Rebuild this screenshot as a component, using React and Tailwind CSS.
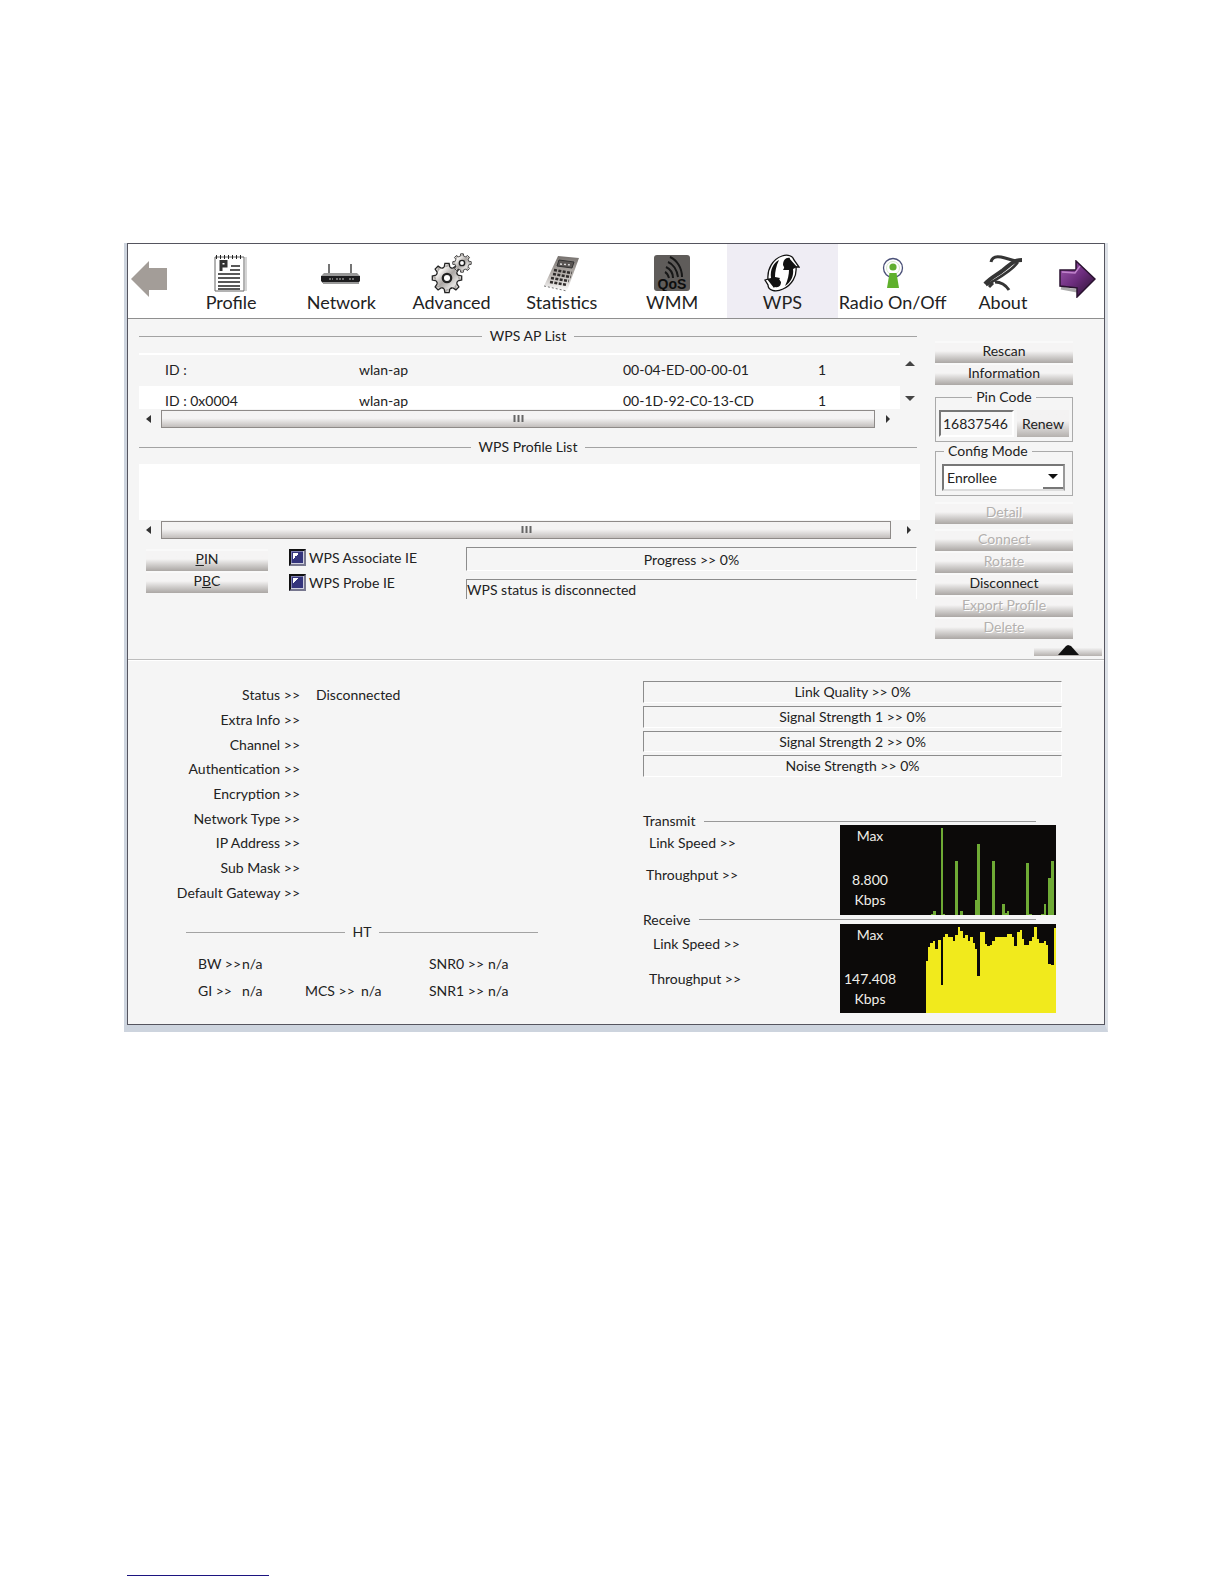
import React from "react";

const ProfileIcon = () => (
  <svg width="34" height="38" viewBox="0 0 34 38" aria-hidden="true">
    <path d="M1 3H30V37H1Z" fill="#fff" stroke="#666" strokeWidth="1" />
    <path d="M32 3V37" stroke="#aaa" strokeWidth="1" />
    <path d="M2 3H30" stroke="#222" strokeWidth="4" strokeDasharray="1 3" />
    <path d="M7 7.500H12V12H7M7 6V17" stroke="#333" strokeWidth="3" fill="none" />
    <path d="M17 12H26M16 16H26M4 20H26M4 24H26M4 28H26M4 32H26M4 35H26" stroke="#222" strokeWidth="1.6" />
  </svg>
);

const NetworkIcon = () => (
  <svg width="42" height="38" viewBox="0 2 42 38" aria-hidden="true">
    <path d="M9 12V23M31 12V23" stroke="#666" strokeWidth="1.8" />
    <path d="M4 21H37L40 24H1Z" fill="#999" />
    <path d="M1 24H40V29L38 31H3L1 29Z" fill="#1c1c1e" />
    <path d="M3 31H39" stroke="#999" strokeWidth="2" />
    <path d="M9 27H13M16 27H24M29 27H34" stroke="#8a8a8a" strokeWidth="1.3" strokeDasharray="2 1" />
  </svg>
);

const teeth = [0, 45, 90, 135, 180, 225, 270, 315];

const Gear = ({ fill }) => (
  <g stroke="#222" strokeWidth="1.2">
    {teeth.map((a) => (
      <path key={a} d="M-3 -9L-2 -14H2L3 -9Z" fill={fill} transform={`rotate(${a})`} />
    ))}
    <circle r="10.5" fill={fill} stroke="none" />
    {teeth.map((a) => (
      <path key={a} d="M2.8 -10.1A10.5 10.5 0 0 1 5.2 -9.1" fill="none" transform={`rotate(${a})`} />
    ))}
    <circle r="4" fill="#fff" strokeWidth="2.2" />
  </g>
);

const AdvancedIcon = () => (
  <svg width="42" height="42" viewBox="0 0 42 42" aria-hidden="true">
    <defs>
      <linearGradient id="gear" x1="0" y1="0" x2="1" y2="1">
        <stop offset="0.2" stopColor="#f4f2f0" />
        <stop offset="0.5" stopColor="#aaa6a3" />
        <stop offset="0.8" stopColor="#e2e0de" />
      </linearGradient>
    </defs>
    <g transform="translate(16 26) scale(1.05)"><Gear fill="url(#gear)" /></g>
    <g transform="translate(31 11) scale(.66)"><Gear fill="url(#gear)" /></g>
  </svg>
);

const StatisticsIcon = () => (
  <svg width="38" height="40" viewBox="0 0 38 40" aria-hidden="true">
    <defs>
      <linearGradient id="calc" x1="0" y1="0" x2="0" y2="1">
        <stop offset="0" stopColor="#75706d" />
        <stop offset="0.55" stopColor="#b9b4b0" />
        <stop offset="1" stopColor="#fff" />
      </linearGradient>
    </defs>
    <path d="M15 3L36 5L24 38L1 33Z" fill="url(#calc)" />
    <path d="M1 33L24 38" stroke="#777" strokeWidth="1" strokeDasharray="2 2" />
    <path d="M16 7L31 9L29 15L14 13Z" fill="#5a5654" stroke="#333" />
    <path d="M17 11L28 12" stroke="#ddd" strokeWidth="1.4" strokeDasharray="2 2" />
    <g stroke="#2f2c2b" strokeWidth="2.6" strokeDasharray="3 1.4">
      <path d="M11 17L29 20M10 21L28 24M8 25L26 28M7 29L24 32" />
    </g>
  </svg>
);

const WmmIcon = () => (
  <svg width="36" height="36" viewBox="0 0 36 36" aria-hidden="true">
    <rect width="36" height="36" rx="3" fill="#5f5c5a" />
    <g fill="none" stroke="#171717" strokeWidth="2">
      <path d="M16 2C23 5 28 13 28 22" />
      <path d="M14 7C19 9 23 15 24 22" />
      <path d="M12 12C16 14 19 18 19 23" />
      <path d="M11 17C13 18 14 20 15 23" />
    </g>
    <text x="18" y="34" textAnchor="middle" fontFamily="Liberation Sans" fontWeight="bold" fontSize="14" fill="#0d0d0d">QoS</text>
  </svg>
);

const WpsIcon = () => (
  <svg width="36" height="38" viewBox="0 0 36 38" aria-hidden="true">
    <path d="M18 2C24 0 29 2 30 6L35 13H32C33 22 28 31 19 35C11 39 4 36 4 31L1 26L4 25C3 15 9 5 18 2Z" fill="#fff" stroke="#111" strokeWidth="1.3" />
    <path d="M15 6C12 12 11 18 11 23L16 24L10 34L3 25L7 24C6 16 9 9 15 6Z" fill="#111" />
    <path d="M9 32C14 35 17 32 17 28L15 25Z" fill="#111" />
    <path d="M21 32C24 26 25 20 25 16H19L25 4L33 13L29 15C30 22 27 28 21 32Z" fill="#111" />
    <path d="M26 4C22 3 19 6 19 11L21 15Z" fill="#111" />
  </svg>
);

const RadioIcon = () => (
  <svg width="24" height="32" viewBox="0 0 24 32" aria-hidden="true">
    <circle cx="12" cy="11" r="9.5" fill="#fff" stroke="#4a5078" strokeWidth="1.3" />
    <circle cx="12" cy="11" r="6.5" fill="#fff" stroke="#d5e8cb" strokeWidth="1" />
    <circle cx="12" cy="10" r="3.6" fill="#5fae2e" />
    <path d="M8.5 16H15.5L18 31H6Z" fill="#5fb02c" />
  </svg>
);

const AboutIcon = () => (
  <svg width="42" height="38" viewBox="0 0 42 38" aria-hidden="true" fill="none" stroke="#353535" strokeLinejoin="round">
    <path d="M9 8C10 3 14 2 19 3C24 4 29 6 34 7" strokeWidth="3" />
    <path d="M40 6C31 6 28 11 20 17C13 22 7 25 3 30" strokeWidth="4" />
    <path d="M36 8C30 17 18 23 8 29L4 31" strokeWidth="2.6" />
    <path d="M13 28C18 28 23 30 27 36M7 33L11 29" strokeWidth="3" />
  </svg>
);

const TABS = [
  ["Profile", ProfileIcon],
  ["Network", NetworkIcon],
  ["Advanced", AdvancedIcon],
  ["Statistics", StatisticsIcon],
  ["WMM", WmmIcon],
  ["WPS", WpsIcon],
  ["Radio On/Off", RadioIcon],
  ["About", AboutIcon],
];

const Toolbar = () => (
  <nav className="flex h-[75px] border-b border-[#8f8f8f] bg-white">
    <button type="button" aria-label="Previous" className="w-12 pl-[3px] pb-1">
      <svg width="37" height="36" viewBox="0 0 37 36"><path d="M0 18L18 0V7H36V29H18V36Z" fill="#a39d98" /></svg>
    </button>
    {TABS.map(([name, Icon]) => (
      <button
        key={name}
        type="button"
        className={`flex min-w-0 flex-1 flex-col items-center whitespace-nowrap text-lg leading-6 text-[#222] ${name === "WPS" ? "bg-[#efedf4]" : ""}`}
      >
        <span className="flex h-[46px] items-center justify-center pt-3"><Icon /></span>
        {name}
      </button>
    ))}
    <button type="button" aria-label="Next" className="w-[46px] pb-1">
      <svg width="38" height="38" viewBox="0 0 38 38">
        <defs>
          <linearGradient id="next" x1="0" y1="0" x2="1" y2="1">
            <stop offset="0" stopColor="#a05ab0" />
            <stop offset="0.5" stopColor="#6b2c7c" />
            <stop offset="1" stopColor="#241029" />
          </linearGradient>
        </defs>
        <path d="M3 28L19 31" stroke="#aaa" strokeWidth="3" />
        <path d="M2 10L18 10V1L37 19L19 37V28L2 26Z" fill="url(#next)" stroke="#2a1230" strokeWidth="1.5" />
        <path d="M4 12L17 13L22 6" stroke="#c083cc" strokeWidth="1.5" fill="none" />
      </svg>
    </button>
  </nav>
);

const Rule = ({ children, className = "" }) => (
  <div className={`flex items-center gap-2 whitespace-nowrap ${className}`}>
    <span className="h-px flex-1 bg-[#a3a3a3]" />
    {children}
    <span className="h-px flex-1 bg-[#a3a3a3]" />
  </div>
);

const Scrollbar = ({ rightClass }) => (
  <div className="flex h-[19px] items-center">
    <svg width="22" height="10" viewBox="0 0 22 10"><path d="M7 5L12 1V9Z" fill="#333" /></svg>
    <div className="flex h-[18px] flex-1 items-center justify-center border border-[#8e8a88] bg-linear-to-b from-[#f4f3f3] from-45% to-[#c2bebc]">
      <svg width="11" height="8" viewBox="0 0 11 8"><path d="M1.5 0V7M5.5 0V7M9.5 0V7" stroke="#666" strokeWidth="2" /></svg>
    </div>
    <span className={rightClass}>
      <svg width="6" height="10" viewBox="0 0 6 10"><path d="M0 1L4 5L0 9Z" fill="#333" /></svg>
    </span>
  </div>
);

const BarButton = ({ children, disabled, className = "" }) => (
  <button
    type="button"
    disabled={disabled}
    className={`h-[22px] w-full border-t-2 border-[#f9f9f9] bg-linear-to-b from-[#f5f4f4] from-40% to-[#aba7a4] pb-1 leading-4 ${disabled ? "text-[#b3b0ae] [text-shadow:1px_1px_0_#fff]" : "text-[#222]"} ${className}`}
  >
    {children}
  </button>
);

const Check = ({ children }) => (
  <label className="flex h-[17px] items-center gap-[3px] whitespace-nowrap">
    <input
      type="checkbox"
      defaultChecked
      className="size-[17px] appearance-none border-2 border-t-[#111] border-l-[#111] border-r-[#77778f] border-b-[#77778f] [background:linear-gradient(135deg,#fff_50%,transparent_50%)_2px_2px/6px_6px_no-repeat,#34347c] shadow-[inset_-1px_-1px_0_#d0d0e0,inset_1px_1px_0_#8080b0]"
    />
    {children}
  </label>
);

const SUNKEN = "border border-t-[#8c8c8c] border-l-[#8c8c8c] border-r-white border-b-white";

const Group = ({ title, legendClass, className, children }) => (
  <fieldset className={`min-w-0 border border-[#aaa] px-[3px] pt-[5px] pb-1 ${className}`}>
    <legend className={`px-1 leading-4 ${legendClass}`}>{title}</legend>
    {children}
  </fieldset>
);

const AP_ROWS = [
  ["ID :", "wlan-ap", "00-04-ED-00-00-01", "1"],
  ["ID : 0x0004", "wlan-ap", "00-1D-92-C0-13-CD", "1"],
];

const WpsPanel = () => (
  <section className="border-b border-[#bdbdbd] pb-[2px]">
    <div className="flex pr-[31px] pl-[11px]">
      <div className="min-w-0 flex-1 pt-[7px]">
        <Rule className="mr-[3px] h-5">WPS AP List</Rule>
        <div className="mt-[7px] flex h-14">
          <div className="min-w-0 flex-1 overflow-hidden border-t-2 border-white">
            <table className="w-full table-fixed border-collapse">
              <colgroup>
                <col className="w-[220px]" />
                <col className="w-[264px]" />
                <col className="w-[195px]" />
                <col />
              </colgroup>
              <tbody>
                {AP_ROWS.map((row, i) => (
                  <tr key={i} className={i ? "bg-white" : "bg-[#f5f5f5]"}>
                    {row.map((cell, j) => (
                      <td key={j} className={`h-[31px] whitespace-nowrap p-0 pb-[2px] leading-5 ${j ? "" : "pl-[26px]"}`}>{cell}</td>
                    ))}
                  </tr>
                ))}
              </tbody>
            </table>
          </div>
          <div className="flex w-5 flex-col items-center justify-between pt-2 pb-2">
            <svg width="10" height="5" viewBox="0 0 10 5"><path d="M0 5L5 0L10 5Z" fill="#444" /></svg>
            <svg width="10" height="5" viewBox="0 0 10 5"><path d="M0 0L5 5L10 0Z" fill="#444" /></svg>
          </div>
        </div>
        <Scrollbar rightClass="w-[45px] pl-[11px]" />
        <Rule className="mt-[9px] mr-[3px] h-5">WPS Profile List</Rule>
        <div className="mt-[7px] h-14 bg-white" />
        <Scrollbar rightClass="w-[29px] pl-4" />
        <div className="mt-2 flex pr-[3px] pl-[7px]">
          <div className="w-[122px] pt-[2px]">
            <BarButton><u>P</u>IN</BarButton>
            <BarButton>P<u>B</u>C</BarButton>
          </div>
          <div className="ml-[21px] flex w-[177px] flex-col gap-2 pt-[2px]">
            <Check>WPS Associate IE</Check>
            <Check>WPS Probe IE</Check>
          </div>
          <div className="min-w-0 flex-1">
            <div className={`h-6 text-center leading-6 ${SUNKEN}`}>Progress &gt;&gt; 0%</div>
            <div className={`mt-2 h-5 border-b-0 leading-5 ${SUNKEN}`}>WPS status is disconnected</div>
          </div>
        </div>
      </div>
      <div className="ml-[15px] w-[138px] pt-[22px]">
        <BarButton>Rescan</BarButton>
        <BarButton>Information</BarButton>
        <Group title="Pin Code" legendClass="mx-auto" className="mt-1">
          <div className="flex gap-[3px]">
            <input
              aria-label="Pin Code"
              defaultValue="16837546"
              className="h-[27px] w-[75px] border-2 border-t-[#777] border-l-[#777] border-r-white border-b-white bg-[#f7f7f7] pl-[2px]"
            />
            <button type="button" className="h-[27px] flex-1 bg-linear-to-b from-[#f3f2f2] from-40% to-[#b5b1ae]">Renew</button>
          </div>
        </Group>
        <Group title={<label htmlFor="mode">Config Mode</label>} legendClass="ml-[5px]" className="mt-px">
          <div className="relative mr-1 ml-[3px]">
            <select id="mode" className="h-[27px] w-full appearance-none border-2 border-t-[#777] border-l-[#777] border-r-[#999] border-b-[#ddd] bg-white pl-[3px]">
              <option>Enrollee</option>
            </select>
            <span className="pointer-events-none absolute top-[2px] right-[2px] flex h-[23px] w-5 items-center justify-center border-b-2 border-[#777] bg-white">
              <svg width="10" height="5" viewBox="0 0 10 5"><path d="M0 0H10L5 5Z" fill="#111" /></svg>
            </span>
          </div>
        </Group>
        <BarButton disabled className="mt-[6px]">Detail</BarButton>
        <BarButton disabled className="mt-[5px]">Connect</BarButton>
        <BarButton disabled>Rotate</BarButton>
        <BarButton>Disconnect</BarButton>
        <BarButton disabled>Export Profile</BarButton>
        <BarButton disabled>Delete</BarButton>
      </div>
    </div>
    <div className="mt-[5px] flex justify-end pr-[2px] pb-px">
      <button type="button" aria-label="Collapse" className="flex h-3 w-[68px] items-center justify-center bg-linear-to-b from-[#f5f5f5] from-30% to-[#b5b1ae]">
        <svg width="21" height="11" viewBox="0 0 21 11"><path d="M0 10L8 1L10 0L13 1L21 10Z" fill="#111" /></svg>
      </button>
    </div>
  </section>
);

const STATUS = ["Status", "Extra Info", "Channel", "Authentication", "Encryption", "Network Type", "IP Address", "Sub Mask", "Default Gateway"];
const METERS = ["Link Quality", "Signal Strength 1", "Signal Strength 2", "Noise Strength"];

const TX = "M304 298V295H309V286H317V298ZM332 298V40H340V294H345V298ZM375 298V138H384V298ZM390 298V286H400V298ZM435 298V254H442V87H451V298ZM486 298V138H495V298ZM516 298V265H524V292H530V286H537V298ZM588 298V143H597V295H605V298ZM634 298V295H642V265H648V298ZM655 298V188H664V138H672V298Z";
const RX = "M288 595V440H294V397H301V385H309V380H316V404H324V376H332V512H340V368H346V358H354V366H368V378H375V362H383V337H391V350H398V370H405V362H414V378H421V367H428V384H435V404H442V483H451V353H464V388H472V394H480V390H487V378H495V366H530V358H546V368H553V395H561V352H569V346H576V374H583V390H597V378H605V366H612V338H620V374H627V384H642V378H648V391H655V447H664V452H672V339H678V595Z";

const Graph = ({ value, d, viewBox, fill }) => (
  <div className="flex h-full w-[216px] bg-[#0c0a09] text-[#f0eee8]">
    <div className="mr-[26px] w-[60px] pt-px text-center leading-5">
      <div>Max</div>
      <div className="mt-6">{value}</div>
      <div>Kbps</div>
    </div>
    <svg className="h-full w-[130px]" viewBox={viewBox} preserveAspectRatio="none" shapeRendering="crispEdges" aria-hidden="true">
      <path d={d} fill={fill} />
    </svg>
  </div>
);

const Traffic = ({ title, headClass, bodyClass, speedClass, throughputClass, children }) => (
  <>
    <div className={`mr-[26px] flex items-center gap-[9px] ${headClass}`}>
      {title}
      <span className="h-px flex-1 bg-[#999]" />
    </div>
    <div className={`mr-[6px] flex justify-between leading-5 ${bodyClass}`}>
      <div>
        <div className={speedClass}>Link Speed &gt;&gt;</div>
        <div className={throughputClass}>Throughput &gt;&gt;</div>
      </div>
      {children}
    </div>
  </>
);

const HtCell = ({ label, className }) => (
  <div className="flex whitespace-nowrap"><span className={className}>{label} &gt;&gt;</span>n/a</div>
);

const StatusPanel = () => (
  <section className="flex border-t border-white pr-[42px] pb-[11px]">
    <div className="w-[515px] pt-[22px]">
      <dl className="grid h-[222px] grid-rows-9 items-center">
        {STATUS.map((s, i) => (
          <div key={s} className="flex gap-4">
            <dt className="w-[172px] text-right">{s} &gt;&gt;</dt>
            <dd>{i === 0 ? "Disconnected" : ""}</dd>
          </div>
        ))}
      </dl>
      <Rule className="mt-[17px] mr-[105px] ml-[58px] h-5">HT</Rule>
      <div className="mt-3 ml-[70px] grid grid-cols-[107px_124px_auto] gap-y-[7px] leading-5">
        <HtCell label="BW" className="w-11" />
        <span />
        <HtCell label="SNR0" className="w-[59px]" />
        <HtCell label="GI" className="w-11" />
        <HtCell label="MCS" className="w-[56px]" />
        <HtCell label="SNR1" className="w-[59px]" />
      </div>
    </div>
    <div className="min-w-0 flex-1 pt-5">
      <div className="grid h-24 grid-rows-4 gap-[3px]">
        {METERS.map((m) => (
          <div key={m} className={`text-center leading-5 ${SUNKEN}`}>{m} &gt;&gt; 0%</div>
        ))}
      </div>
      <div className="mt-10">
        <Traffic title="Transmit" headClass="h-2" bodyClass="h-[90px]" speedClass="pt-2 pl-[6px]" throughputClass="pt-3 pl-[3px]">
          <Graph value="8.800" d={TX} viewBox="288 31 390 267" fill="#6fab35" />
        </Traffic>
        <Traffic title="Receive" headClass="h-[9px]" bodyClass="h-[89px]" speedClass="pt-[10px] pl-[10px]" throughputClass="pt-[15px] pl-[6px]">
          <Graph value="147.408" d={RX} viewBox="288 328 390 267" fill="#f1ea1c" />
        </Traffic>
      </div>
    </div>
  </section>
);

export default function App() {
  return (
    <div className="flex min-h-screen flex-col bg-white pt-[243px] pr-[116px] pb-2 pl-[124px] font-['Lato',sans-serif] text-sm text-[#222]">
      <main className="border-r-[3px] border-b-[7px] border-l-[3px] border-[#cdd4de] border-r-[#dde1e7]">
        <div className="border border-[#55555f] bg-[#f5f5f5]">
          <Toolbar />
          <WpsPanel />
          <StatusPanel />
        </div>
      </main>
      <footer className="mt-auto ml-[3px] w-[142px] border-b border-[#1c1480]" />
    </div>
  );
}
